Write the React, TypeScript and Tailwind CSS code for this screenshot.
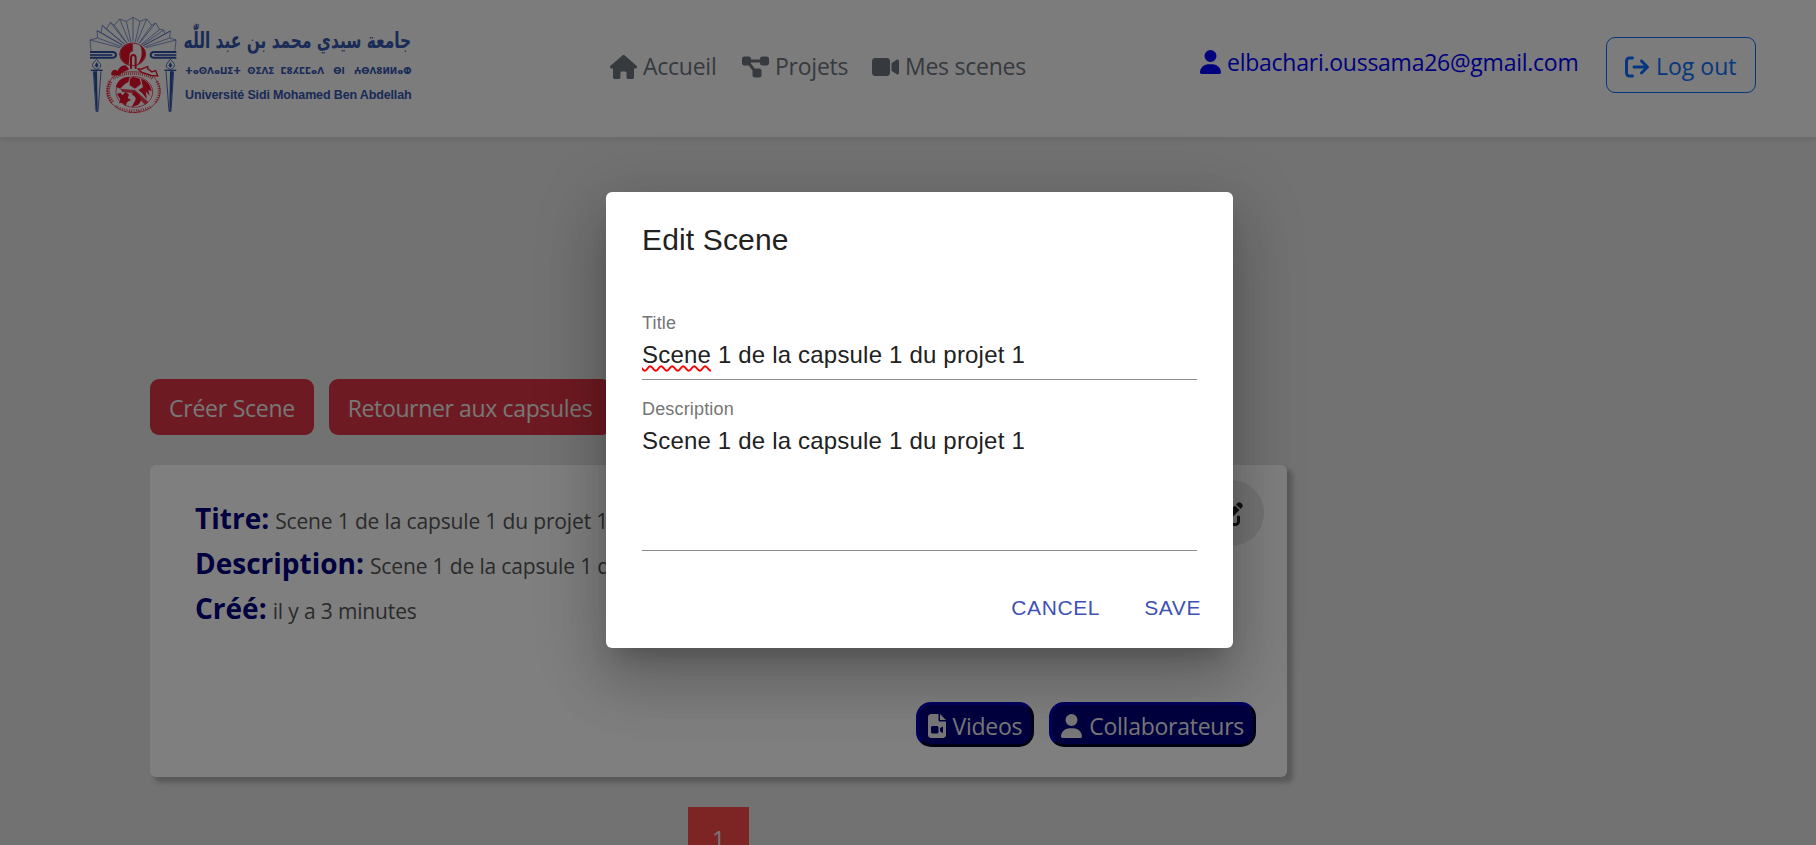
import type { ReactNode } from "react";
import {
  FaHouse,
  FaDiagramProject,
  FaVideo,
  FaUser,
  FaArrowRightFromBracket,
  FaFileVideo,
  FaPenToSquare,
} from "react-icons/fa6";

const FAN: [number, number][] = [
  [15, 90], [36, 62], [52, 46], [76, 37], [104, 27], [144, 22],
  [185, 27], [212, 39], [236, 60], [256, 63], [273, 90],
];

const NOTCHES: [number, number][] = [
  [38, 84], [48, 68], [64, 58], [88, 46], [124, 34],
  [165, 34], [200, 46], [224, 58], [240, 72], [254, 84],
];

function fanOutline() {
  return FAN.map((p, i) => {
    const n = NOTCHES[i];
    return `${i ? "L" : "M"}${p[0]} ${p[1]}${n ? ` L${n[0]} ${n[1]}` : ""}`;
  }).join(" ");
}

function fanRays() {
  return [...FAN, ...NOTCHES]
    .map(([x, y]) => {
      const k = 0.3;
      return `M${x} ${y} L${144 + (x - 144) * k} ${Math.min(122, y + (122 - y) * 0.72)}`;
    })
    .join(" ");
}

function Torch({ x }: { x: number }) {
  return (
    <g transform={`translate(${x} 0)`} stroke="#2c4fa8" fill="none" strokeWidth="2.5">
      <path d="M0 148 C-8 156 -14 162 -12 168 C-10 174 -5 177 0 178 C5 177 11 174 12 168 C13 162 6 156 0 148Z" />
      <path d="M0 158 L-4 167 L0 172 L4 167Z" fill="#2c4fa8" />
      <path d="M-18 181 H18" strokeWidth="4" />
      <path d="M-10 184 L-2 304 H4 L13 184" />
      <path d="M-9 184 L-1 304 H3 L1 184Z" fill="#2c4fa8" stroke="none" />
    </g>
  );
}

function Emblem() {
  return (
    <svg viewBox="0 0 300 330" className="h-[110px] w-[100px] shrink-0">
      <g stroke="#4a68b8" fill="none" strokeWidth="2">
        <path d={fanOutline()} />
        <path d={fanRays()} />
        <path d="M15 90 L18 122 M273 90 L270 122" />
      </g>
      <g fill="none" stroke="#2c4fa8" strokeWidth="6">
        <path d="M15 126 H84 C96 128 96 142 84 143 H15" />
        <path d="M15 135 H82" strokeWidth="5" />
        <path d="M274 126 H206 C194 128 194 142 206 143 H274" />
        <path d="M274 135 H208" strokeWidth="5" />
      </g>
      <Torch x={35} />
      <g transform="translate(291 0) scale(-1 1)">
        <Torch x={35} />
      </g>
      <g fill="none" stroke="#e8102c">
        <ellipse cx="143" cy="133" rx="39" ry="34" strokeWidth="2.5" />
        <path
          d="M143 101 C118 101 106 116 106 133 C106 148 116 160 131 164 L133 140 C133 128 138 124 143 124Z"
          fill="#e8102c"
          strokeWidth="1"
        />
        <path d="M166 106 C188 120 186 150 158 164 C172 146 174 124 166 106Z" fill="#e8102c" strokeWidth="1" />
        <path d="M138 176 V144 C138 132 152 132 152 144 V176" strokeWidth="6" />
        <path
          d="M80 196 C76 180 92 176 98 184 C104 166 118 168 122 166 L132 178 C122 184 108 186 104 196Z"
          fill="#e8102c"
          strokeWidth="1"
        />
        <path d="M158 176 C170 182 176 172 188 170 C184 180 196 178 200 186 L212 182 L218 198 L196 196 L172 188Z" strokeWidth="4" />
        <path
          d="M84 200 C110 180 178 180 206 200 C228 224 232 254 214 276 C196 300 176 306 148 308 C120 308 96 298 78 278 C62 254 64 222 84 200Z"
          strokeWidth="2"
        />
        <g opacity=".7">
          <path d="M84 206 C114 186 176 186 204 206" strokeWidth="8" strokeDasharray="3 3" />
          <path d="M76 214 C64 240 68 262 84 278" strokeWidth="12" strokeDasharray="4 3" />
          <path d="M216 214 C228 240 224 262 208 280" strokeWidth="9" strokeDasharray="3 4" />
          <path d="M92 288 C120 306 172 306 200 288" strokeWidth="7" strokeDasharray="3 4" />
        </g>
        <ellipse cx="148" cy="246" rx="55" ry="46" strokeWidth="2" />
      </g>
      <g fill="#e8102c">
        <path d="M92 230 C100 208 116 200 134 200 L130 216 C118 222 112 230 106 236Z" />
        <path d="M134 208 L144 200 L164 206 L168 222 L150 236 L134 226Z" />
        <path d="M168 206 C184 210 196 222 200 244 L190 240 L194 258 L182 244 L186 268 L172 250 L160 240 L174 232Z" />
        <path d="M96 252 L106 248 L112 256 L122 246 L132 254 L128 264 L138 270 L126 276 L122 288 L112 278 L102 280 L106 268Z" />
        <path d="M146 244 L156 250 C170 260 172 274 160 284 L140 292 L150 272 C156 264 148 256 140 254Z" />
        <path d="M106 236 L150 240 L190 276 L180 284 L146 250 L112 246Z" opacity=".8" />
      </g>
      <path
        d="M132 304 q4 6 9 0 M146 308 q6 -4 8 2 M158 302 q2 8 8 2"
        stroke="#e8102c"
        strokeWidth="2.5"
        fill="none"
      />
    </svg>
  );
}

function Brand() {
  return (
    <div className="flex pt-[10px] pl-[85px]">
      <Emblem />
      <div className="flex w-[230px] flex-col whitespace-nowrap text-[#3256ac]">
        <div
          dir="rtl"
          className="mt-[11px] h-[40px] w-[226px] text-right font-['DejaVu_Sans',sans-serif] text-[22px] leading-[40px] font-bold"
        >
          <span className="inline-block origin-right scale-x-[0.7]">جامعة سيدي محمد بن عبد اللّٰه</span>
        </div>
        <div className="h-[20px] font-['DejaVu_Sans',sans-serif] text-[10px] leading-[20px] font-bold">
          <span className="inline-block origin-left scale-x-[0.88]">
            ⵜⴰⵙⴷⴰⵡⵉⵜ&nbsp; ⵙⵉⴷⵉ&nbsp; ⵎⵓⵃⵎⵎⴰⴷ&nbsp;&nbsp; ⴱⵏ&nbsp;&nbsp; ⵄⴱⴷⵓⵍⵍⴰⵀ
          </span>
        </div>
        <div className="mt-[4px] font-['Liberation_Sans',sans-serif] text-[12.5px] leading-[20px] font-bold tracking-[-0.14px]">
          Université Sidi Mohamed Ben Abdellah
        </div>
      </div>
    </div>
  );
}

function NavLink({ icon, width, children }: { icon: ReactNode; width: string; children: ReactNode }) {
  return (
    <a className={`flex items-center gap-[6px] text-[#6c757d] ${width}`}>
      {icon}
      <span className="tracking-[-0.25px]">{children}</span>
    </a>
  );
}

function Header() {
  return (
    <header className="flex h-[137px] bg-[#f8f8f8] shadow-[0_3px_6px_rgba(0,0,0,0.08)]">
      <div className="w-[610px] shrink-0">
        <Brand />
      </div>
      <nav className="flex h-[133px] w-[590px] shrink-0 items-center">
        <NavLink width="w-[132px]" icon={<FaHouse className="h-6 w-[27px]" />}>Accueil</NavLink>
        <NavLink width="w-[130px]" icon={<FaDiagramProject className="h-6 w-[27px]" />}>Projets</NavLink>
        <NavLink width="w-[160px]" icon={<FaVideo className="h-6 w-[27px]" />}>Mes scenes</NavLink>
      </nav>
      <div className="flex h-[124px] w-[406px] shrink-0 items-center gap-[6px] text-[#0000ff]">
        <FaUser className="h-6 w-[21px]" />
        <span className="pt-px tracking-[-0.25px]">elbachari.oussama26@gmail.com</span>
      </div>
      <button className="mt-[37px] flex h-[56px] w-[150px] items-center gap-[7px] rounded-[9px] border border-[#0d6efd] pt-[3px] pl-[18px] text-[#0d6efd]">
        <FaArrowRightFromBracket className="h-6 w-6" />
        <span>Log out</span>
      </button>
    </header>
  );
}

function Field({ label, value }: { label: string; value: string }) {
  return (
    <p className="flex h-[45px] items-baseline gap-[6px] whitespace-nowrap">
      <b className="text-[28px] leading-[45px] font-bold text-[#000080]">{label}</b>
      <span className="text-[21px] tracking-[-0.15px] text-[#555]">{value}</span>
    </p>
  );
}

function CardButton({ icon, children }: { icon: ReactNode; children: ReactNode }) {
  return (
    <button className="flex h-[45px] items-center gap-[7px] rounded-[15px] border-3 border-t-[#0000c0] border-r-[#00002a] border-b-[#00002a] border-l-[#0000c0] bg-[#000080] px-[9px] pt-[3px] text-[#f0f0f0]">
      {icon}
      <span className="pt-px tracking-[-0.26px]">{children}</span>
    </button>
  );
}

function SceneCard() {
  return (
    <section className="mt-[30px] flex h-[312px] w-[1137px] flex-col rounded-md bg-white shadow-[5px_5px_4px_1px_#b4b4b4]">
      <div className="flex justify-between pr-[23px] pl-[45px]">
        <div className="pt-[31px]">
          <Field label="Titre:" value="Scene 1 de la capsule 1 du projet 1" />
          <Field label="Description:" value="Scene 1 de la capsule 1 du projet 1" />
          <Field label="Créé:" value="il y a 3 minutes" />
        </div>
        <button className="mt-[15px] flex size-[66px] items-center justify-center rounded-full bg-[#e8e8e8] pt-[2px] text-[#212529]">
          <FaPenToSquare className="size-6" />
        </button>
      </div>
      <div className="mt-auto mb-[30px] flex justify-end gap-[15px] pr-[31px]">
        <CardButton icon={<FaFileVideo className="h-6 w-[18px]" />}>Videos</CardButton>
        <CardButton icon={<FaUser className="h-6 w-[21px]" />}>Collaborateurs</CardButton>
      </div>
    </section>
  );
}

function EditDialog() {
  return (
    <div className="absolute inset-0 bg-black/50">
      <div
        role="dialog"
        className="mt-[192px] ml-[606px] flex h-[456px] w-[627px] flex-col rounded-md bg-white px-9 font-['Liberation_Sans',Arial,sans-serif] text-[#212121] shadow-[0_16px_22px_-10px_rgba(0,0,0,0.2),0_36px_57px_4px_rgba(0,0,0,0.14),0_14px_69px_12px_rgba(0,0,0,0.12)]"
      >
        <h2 className="mt-6 h-12 text-[30px] leading-[48px] tracking-[0.15px]">Edit Scene</h2>
        <label className="mt-[48px] h-[22px] text-[18px] leading-[22px] tracking-[0.17px] text-[#757575]">Title</label>
        <div className="h-[46px] border-b border-[#8c8c8c] pt-[5px] text-[24px] leading-[32px] tracking-[0.19px]">
          <span className="underline decoration-[#ff0000] decoration-wavy decoration-[1.5px] underline-offset-[2px]">
            Scene
          </span>{" "}
          1 de la capsule 1 du projet 1
        </div>
        <label className="mt-[18px] h-[22px] text-[18px] leading-[22px] tracking-[0.17px] text-[#757575]">
          Description
        </label>
        <div className="h-[131px] border-b border-[#8c8c8c] pt-[5px] text-[24px] leading-[32px] tracking-[0.19px]">
          Scene 1 de la capsule 1 du projet 1
        </div>
        <div className="mt-[38px] -mr-[4px] flex justify-end gap-[44px] text-[21px] leading-[38px] tracking-[0.6px] text-[#3f51b5]">
          <button>CANCEL</button>
          <button>SAVE</button>
        </div>
      </div>
    </div>
  );
}

export default function App() {
  return (
    <div className="relative h-[845px] w-[1816px] overflow-hidden bg-[#e4e4e4] font-['Open_Sans',sans-serif] text-[23px] whitespace-nowrap">
      <Header />
      <main className="pt-[242px] pl-[150px]">
        <div className="flex gap-[15px] text-[#eee]">
          <button className="h-14 w-[164px] rounded-[9px] bg-[#dc3545] pt-[2px] tracking-[-0.25px]">Créer Scene</button>
          <button className="h-14 w-[282px] rounded-[9px] bg-[#dc3545] pt-[2px] tracking-[-0.36px]">
            Retourner aux capsules
          </button>
        </div>
        <SceneCard />
        <div className="mt-[30px] ml-[538px] flex h-[60px] w-[61px] justify-center bg-[#fa4848] pt-[16px] leading-[32px] text-[#eee]">
          1
        </div>
      </main>
      <EditDialog />
    </div>
  );
}
